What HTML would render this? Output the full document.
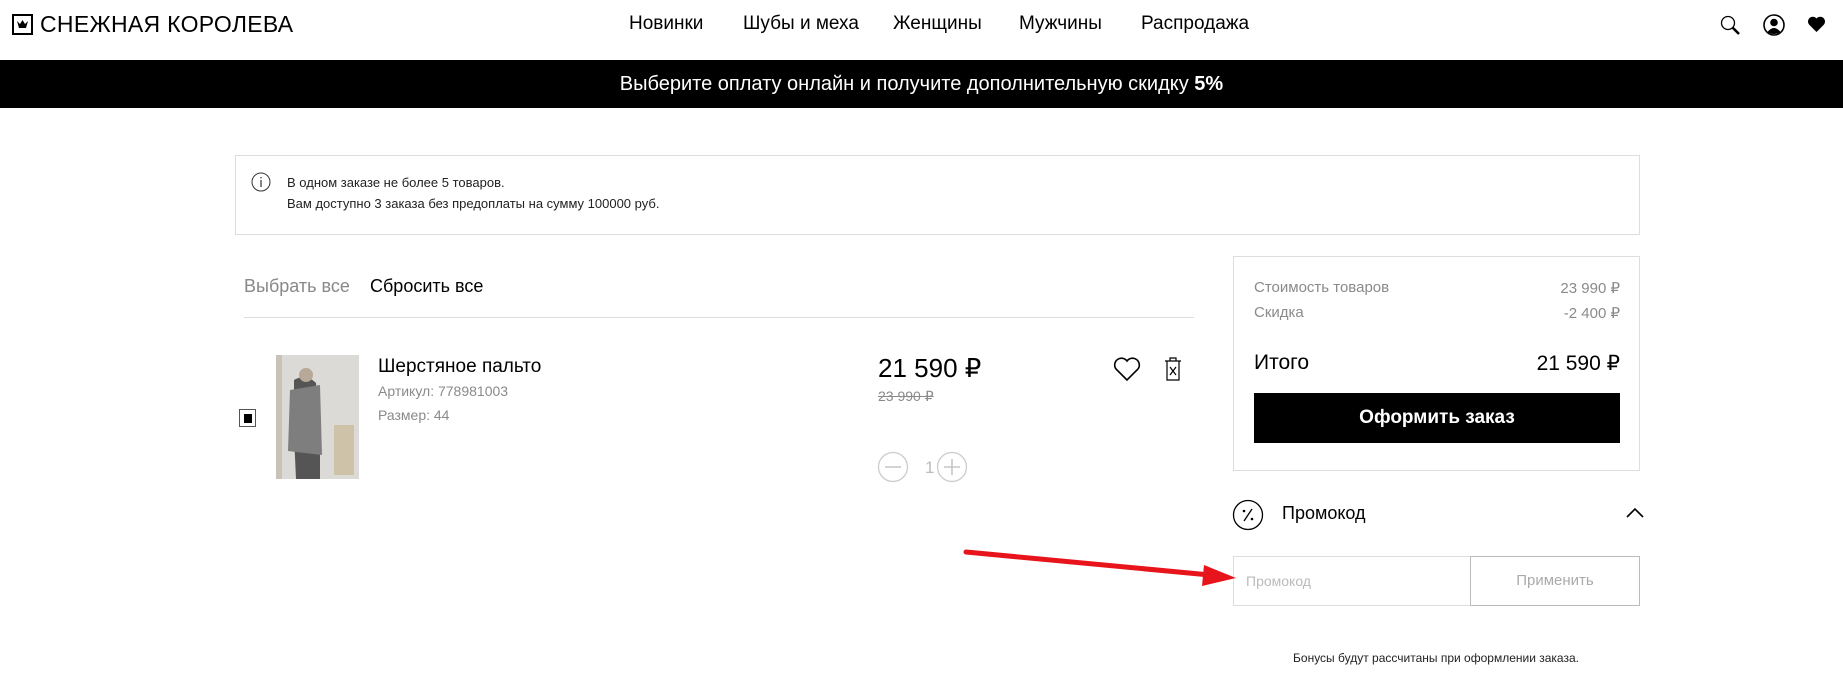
<!DOCTYPE html>
<html><head><meta charset="utf-8"><style>
*{margin:0;padding:0;box-sizing:border-box}
body{width:1843px;height:679px;overflow:hidden;background:#fff;font-family:"Liberation Sans","Noto Sans CJK SC",sans-serif;color:#000;position:relative}
.a{position:absolute;white-space:nowrap}
.nav{top:13px;font-size:19px}
.bar{left:0;top:60px;width:1843px;height:48px;background:#000;color:#fff;font-size:20px;text-align:center;line-height:48px}
.g{color:#8a8a8a}
</style></head><body>
<svg class="a" style="left:12px;top:14px" width="21" height="21" viewBox="0 0 21 21"><rect x="1" y="1" width="19" height="19" fill="none" stroke="#000" stroke-width="2"/><path d="M5 7 L7 14 H14 L16 7 L13 10 L10.5 6 L8 10 Z" fill="#000"/></svg>
<div class="a" style="left:40px;top:11px;font-size:23px;letter-spacing:0.3px">СНЕЖНАЯ КОРОЛЕВА</div>
<div class="a nav" style="left:629px">Новинки</div>
<div class="a nav" style="left:743px">Шубы и меха</div>
<div class="a nav" style="left:893px">Женщины</div>
<div class="a nav" style="left:1019px">Мужчины</div>
<div class="a nav" style="left:1141px">Распродажа</div>
<svg class="a" style="left:1719px;top:14px" width="24" height="24" viewBox="0 0 24 24"><circle cx="9" cy="9" r="6.5" fill="none" stroke="#000" stroke-width="1.3"/><path d="M13.5 13.5 L20 20" stroke="#000" stroke-width="2.6"/></svg>
<svg class="a" style="left:1763px;top:14px" width="22" height="22" viewBox="0 0 22 22"><circle cx="11" cy="11" r="10" fill="none" stroke="#000" stroke-width="1.6"/><circle cx="11" cy="8.5" r="3.8"/><path d="M4.5 18 Q11 10 17.5 18 Q11 22 4.5 18Z"/></svg>
<svg class="a" style="left:1807px;top:16px" width="19" height="17" viewBox="0 0 19 17"><path d="M9.5 16 L2 8.5 A4.3 4.3 0 0 1 9.5 2.5 A4.3 4.3 0 0 1 17 8.5 Z" fill="#000"/></svg>
<div class="a bar">Выберите оплату онлайн и получите дополнительную скидку <b>5%</b></div>

<div class="a" style="left:235px;top:155px;width:1405px;height:80px;border:1px solid #ddd"></div>
<svg class="a" style="left:251px;top:172px" width="20" height="20" viewBox="0 0 20 20"><circle cx="10" cy="10" r="9" fill="none" stroke="#333" stroke-width="1"/><rect x="9.4" y="5" width="1.2" height="1.4" fill="#333"/><rect x="9.4" y="8" width="1.2" height="7" fill="#333"/></svg>
<div class="a" style="left:287px;top:175px;font-size:13px;color:#222">В одном заказе не более 5 товаров.</div>
<div class="a" style="left:287px;top:196px;font-size:13px;color:#222">Вам доступно 3 заказа без предоплаты на сумму 100000 руб.</div>

<div class="a g" style="left:244px;top:276px;font-size:18px;color:#888">Выбрать все</div>
<div class="a" style="left:370px;top:276px;font-size:18px">Сбросить все</div>
<div class="a" style="left:244px;top:317px;width:950px;height:1px;background:#ddd"></div>

<div class="a" style="left:239px;top:409px;width:17px;height:18px;border:1px solid #555"><div style="margin:4px 0 0 4px;width:8px;height:9px;background:#000"></div></div>
<svg class="a" style="left:276px;top:355px" width="83" height="124" viewBox="0 0 83 124"><rect width="83" height="124" fill="#dcdad6"/><rect x="0" width="6" height="124" fill="#c9c2b6"/><path d="M18 25 Q30 18 40 28 L44 80 L44 124 H20 L18 80 Z" fill="#555"/><path d="M14 35 L44 30 L46 100 L12 96 Z" fill="#7e7e7e"/><circle cx="30" cy="20" r="7" fill="#b8a898"/><rect x="58" y="70" width="20" height="50" fill="#c8b894" opacity=".7"/></svg>
<div class="a" style="left:378px;top:356px;font-size:19px">Шерстяное пальто</div>
<div class="a g" style="left:378px;top:383px;font-size:14px">Артикул: 778981003</div>
<div class="a g" style="left:378px;top:407px;font-size:14px">Размер: 44</div>

<div class="a" style="left:878px;top:353px;font-size:26px">21 590 ₽</div>
<div class="a g" style="left:878px;top:388px;font-size:14px;text-decoration:line-through">23 990 ₽</div>
<svg class="a" style="left:877px;top:451px" width="100" height="32" viewBox="0 0 100 32"><circle cx="16" cy="16" r="14.5" fill="none" stroke="#ccc" stroke-width="1.3"/><path d="M8 16 H24 M67 16 H83 M75 8 V24" stroke="#bbb" stroke-width="1.3"/><circle cx="75" cy="16" r="14.5" fill="none" stroke="#ccc" stroke-width="1.3"/><text x="48" y="22" font-family="Liberation Sans" font-size="17" fill="#bbb">1</text></svg>
<svg class="a" style="left:1113px;top:356px" width="28" height="26" viewBox="0 0 28 26"><path d="M14 24 L3 13 A6 6 0 0 1 14 5 A6 6 0 0 1 25 13 Z" fill="none" stroke="#000" stroke-width="1.6"/></svg>
<svg class="a" style="left:1163px;top:356px" width="20" height="26" viewBox="0 0 20 26"><path d="M2 5 H18 M7 5 V2 H13 V5 M4 5 V24 H16 V5 M7 11 L13 19 M13 11 L7 19" fill="none" stroke="#000" stroke-width="1.2"/></svg>

<div class="a" style="left:1233px;top:256px;width:407px;height:215px;border:1px solid #ddd"></div>
<div class="a g" style="left:1254px;top:279px;font-size:15px">Стоимость товаров</div>
<div class="a g" style="left:1254px;top:304px;font-size:15px">Скидка</div>
<div class="a g" style="left:1420px;width:200px;text-align:right;top:279px;font-size:15px">23 990 ₽</div>
<div class="a g" style="left:1420px;width:200px;text-align:right;top:304px;font-size:15px">-2 400 ₽</div>
<div class="a" style="left:1254px;top:351px;font-size:21px">Итого</div>
<div class="a" style="left:1420px;width:200px;text-align:right;top:351px;font-size:21px">21 590 ₽</div>
<div class="a" style="left:1254px;top:393px;width:366px;height:50px;background:#000;color:#fff;font-size:19px;font-weight:bold;text-align:center;line-height:50px">Оформить заказ</div>

<svg class="a" style="left:1232px;top:499px" width="32" height="32" viewBox="0 0 32 32"><circle cx="16" cy="16" r="14.5" fill="none" stroke="#000" stroke-width="1.3"/><path d="M20 10 L12 22" stroke="#000" stroke-width="1.3"/><circle cx="12" cy="12" r="1.3"/><circle cx="20" cy="20" r="1.3"/></svg>
<div class="a" style="left:1282px;top:503px;font-size:18px">Промокод</div>
<svg class="a" style="left:1626px;top:507px" width="18" height="12" viewBox="0 0 18 12"><path d="M1 10 L9 2 L17 10" fill="none" stroke="#000" stroke-width="1.6"/></svg>
<div class="a" style="left:1233px;top:556px;width:238px;height:50px;border:1px solid #ddd;font-size:14px;color:#bbb;line-height:48px;padding-left:12px">Промокод</div>
<div class="a" style="left:1470px;top:556px;width:170px;height:50px;border:1px solid #bbb;font-size:15px;color:#aaa;line-height:48px;text-align:center">Применить</div>
<div class="a" style="left:1236px;width:400px;text-align:center;top:651px;font-size:12px;color:#222">Бонусы будут рассчитаны при оформлении заказа.</div>

<svg class="a" style="left:0;top:0" width="1843" height="679"><path d="M966 552 L1210 575" stroke="#e8141b" stroke-width="5" stroke-linecap="round"/><path d="M1236 578 L1204 565 L1202 586 Z" fill="#e8141b"/></svg>
</body></html>
